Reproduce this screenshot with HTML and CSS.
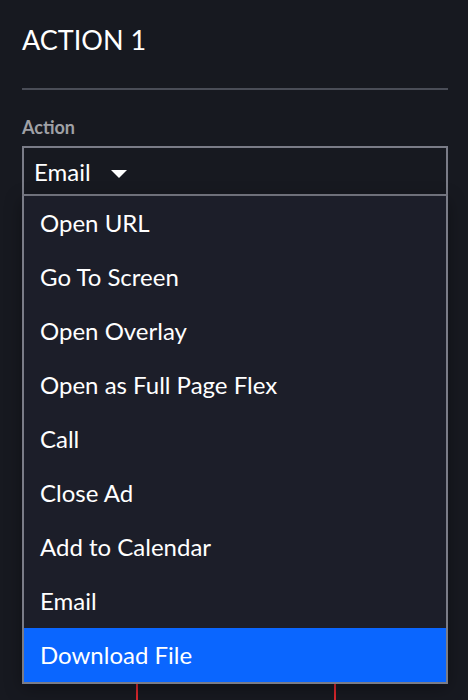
FILE: index.html
```html
<!DOCTYPE html>
<html lang="en">
<head>
    <meta charset="UTF-8">
    <meta name="viewport" content="width=device-width, initial-scale=1.0">
    <title>Action Settings</title>
    <link rel="stylesheet" href="styles.css">
</head>
<body>

    <div class="panel">
        <h2 class="panel-title">ACTION 1</h2>

        <div class="field">
            <label class="field-label">Action</label>
            <div class="select">
                <div class="select-value">
                    Email
                    <svg class="caret" width="16" height="8" viewBox="0 0 16 8"><path d="M0 0 L16 0 L8 8 Z" fill="#fff"/></svg>
                </div>
                <ul class="select-menu">
                    <li>Open URL</li>
                    <li>Go To Screen</li>
                    <li>Open Overlay</li>
                    <li>Open as Full Page Flex</li>
                    <li>Call</li>
                    <li>Close Ad</li>
                    <li>Add to Calendar</li>
                    <li>Email</li>
                    <li class="active">Download File</li>
                </ul>
            </div>
        </div>

        <!-- vista previa detrás del menú -->
        <div class="preview"></div>
    </div>

</body>
</html>
```

FILE: styles.css
```css
body {
    font-family: 'Lato', 'Noto Sans', sans-serif;
    background-color: #171920;
    color: #fff;
    margin: 0;
    overflow: hidden;
}

.panel {
    padding: 0 20px 0 22px;
}

.panel-title {
    margin: 0;
    padding: 23px 0 31px;
    font-size: 27px;
    font-weight: 400;
    line-height: 34px;
    border-bottom: 2px solid #4a4d57;
}

.field {
    margin-top: 27px;
}

.field-label {
    display: block;
    color: #a0a1a6;
    font-size: 18px;
    font-weight: bold;
    line-height: 20px;
    margin-bottom: 9px;
}

.select {
    position: relative;
}

.select-value {
    display: flex;
    align-items: center;
    height: 44px;
    padding: 2px 10px 0;
    border: 2px solid #7a7c87;
    font-size: 24px;
    line-height: 44px;
}

.caret {
    margin-left: 20px;
    margin-top: 3px;
}

.select-menu {
    position: absolute;
    top: 50px;
    left: 0;
    right: 0;
    margin: 0;
    padding: 0;
    list-style: none;
    background-color: #1c1e29;
    border: 2px solid #7a7c87;
    border-top: none;
    box-shadow: 0 4px 16px rgba(0, 0, 0, 0.35);
    z-index: 2;
}

.select-menu li {
    height: 54px;
    line-height: 54px;
    padding-left: 16px;
    font-size: 24px;
}

.select-menu li.active {
    background-color: #0a66ff;
}

.preview {
    margin: 60px 112px 0 114px;
    height: 446px;
    border-left: 2px solid #d8262c;
    border-right: 2px solid #d8262c;
}
```
